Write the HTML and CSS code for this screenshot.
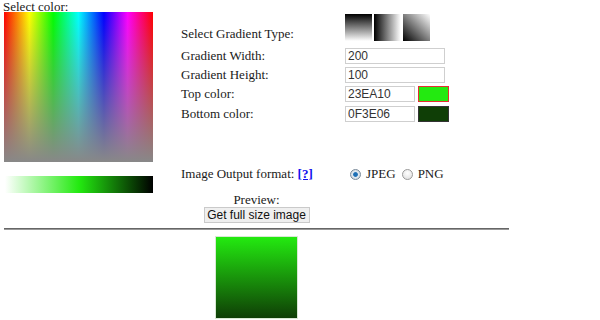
FILE: index.html
```html
<!DOCTYPE html>
<html>
<head>
<meta charset="utf-8">
<link rel="stylesheet" href="styles.css">
</head>
<body>
<div class="page">
  <div class="top">
    <div class="left">
      <div class="title">Select color:</div>
      <div class="picker"></div>
      <div class="bar"></div>
    </div>
    <div class="right">
      <div class="row type-row">
        <div class="label type-label">Select Gradient Type:</div>
        <div class="types">
          <div class="gtype gt-v"></div>
          <div class="gtype gt-h"></div>
          <div class="gtype gt-d"></div>
        </div>
      </div>
      <div class="row field-row first-field">
        <div class="label">Gradient Width:</div>
        <div class="input wide">200</div>
      </div>
      <div class="row field-row">
        <div class="label">Gradient Height:</div>
        <div class="input wide">100</div>
      </div>
      <div class="row field-row">
        <div class="label">Top color:</div>
        <div class="input narrow">23EA10</div>
        <div class="swatch swatch-top"></div>
      </div>
      <div class="row field-row last-field">
        <div class="label">Bottom color:</div>
        <div class="input narrow">0F3E06</div>
        <div class="swatch swatch-bottom"></div>
      </div>
      <div class="row format-row">
        <div class="label">Image Output format: <a class="help" href="#">[?]</a></div>
        <div class="formats">
          <span class="radio checked"></span><span class="opt">JPEG</span>
          <span class="radio"></span><span class="opt">PNG</span>
        </div>
      </div>
    </div>
  </div>
  <div class="preview-title">Preview:</div>
  <div class="btn-wrap"><button class="btn">Get full size image</button></div>
  <div class="rule"></div>
  <div class="preview-wrap"><div class="preview"></div></div>
</div>
</body>
</html>
```

FILE: styles.css
```css
html, body {
  margin: 0;
  padding: 0;
  background: #fff;
}
body {
  font-family: "Liberation Serif", "DejaVu Serif", serif;
  font-size: 13px;
  color: #1a1a1a;
}
.page {
  width: 505px;
  padding-left: 4px;
}
.top {
  display: flex;
}
.left {
  width: 149px;
  flex: none;
}
.title {
  height: 12px;
  line-height: 14px;
  margin-left: -1px;
}
.picker {
  width: 149px;
  height: 150px;
  background:
    linear-gradient(to bottom, rgba(136,136,136,0) 0%, rgba(136,136,136,1) 100%),
    linear-gradient(to right, #ff0000 0%, #ffff00 17%, #00ff00 33%, #00ffff 50%, #0000ff 67%, #ff00ff 83%, #ff0000 100%);
}
.bar {
  width: 148px;
  height: 17px;
  margin-top: 14px;
  margin-left: 1px;
  background: linear-gradient(to right, #ffffff 0%, #23ea10 50%, #000000 100%);
}
.right {
  margin-left: 28px;
  flex: 1;
}
.row {
  display: flex;
  align-items: center;
}
.label {
  width: 164px;
  flex: none;
  line-height: 16px;
}
.type-row {
  margin-top: 14px;
  height: 27px;
  align-items: flex-end;
}
.type-label {
  margin-bottom: -1px;
}
.types {
  display: flex;
  gap: 2px;
}
.gtype {
  width: 27px;
  height: 27px;
}
.gt-v { background: linear-gradient(to bottom, #000 0%, #fff 100%); }
.gt-h { background: linear-gradient(to right, #000 0%, #eee 92%, #fff 100%); }
.gt-d { background: linear-gradient(to top right, #000 0%, #fff 100%); }
.field-row {
  margin-top: 3px;
  height: 16px;
}
.first-field {
  margin-top: 7px;
}
.last-field {
  margin-top: 4px;
}
.input {
  box-sizing: border-box;
  height: 16px;
  border: 1px solid #cfcfcf;
  font-family: "Liberation Sans", Arial, sans-serif;
  font-size: 12px;
  line-height: 14px;
  color: #333;
  padding-left: 2px;
}
.wide { width: 100px; }
.narrow { width: 70px; }
.swatch {
  box-sizing: border-box;
  width: 31px;
  height: 16px;
  margin-left: 3px;
}
.swatch-top {
  background: #23ea10;
  border: 1px solid #e53030;
}
.swatch-bottom {
  background: #0f3e06;
  border: 1px solid #333;
}
.format-row {
  margin-top: 44px;
  height: 16px;
}
.help {
  color: #1111ee;
  font-weight: bold;
}
.formats {
  display: flex;
  align-items: center;
  padding-left: 5px;
}
.radio {
  box-sizing: border-box;
  width: 11px;
  height: 11px;
  border-radius: 50%;
  border: 1px solid #9a9a9a;
  background: radial-gradient(circle at 50% 35%, #ffffff 0%, #dcdcdc 100%);
}
.radio.checked {
  background: radial-gradient(circle at 50% 50%, #1d6fb5 0%, #1d6fb5 30%, #dfe8f0 45%, #c8d0d8 100%);
  border-color: #7a8a99;
}
.opt {
  margin-left: 5px;
  margin-right: 6px;
}
.preview-title {
  text-align: center;
  line-height: 13px;
  height: 13px;
}
.btn-wrap {
  text-align: center;
  margin-top: 1px;
  height: 16px;
}
.btn {
  box-sizing: border-box;
  width: 106px;
  height: 16px;
  padding: 0;
  margin: 0;
  border: 1px solid #cacaca;
  background: #efefef;
  font-family: "Liberation Sans", Arial, sans-serif;
  font-size: 12px;
  line-height: 14px;
  color: #111;
  vertical-align: top;
}
.rule {
  margin-top: 5px;
  height: 0;
  border-top: 1px solid #666;
  border-bottom: 1px solid #999;
}
.preview-wrap {
  display: flex;
  justify-content: center;
  margin-top: 6px;
}
.preview {
  box-sizing: border-box;
  width: 83px;
  height: 83px;
  border: 1px solid #d8e8d4;
  background: linear-gradient(to bottom, #23ea10 0%, #0f3e06 100%);
}
```
